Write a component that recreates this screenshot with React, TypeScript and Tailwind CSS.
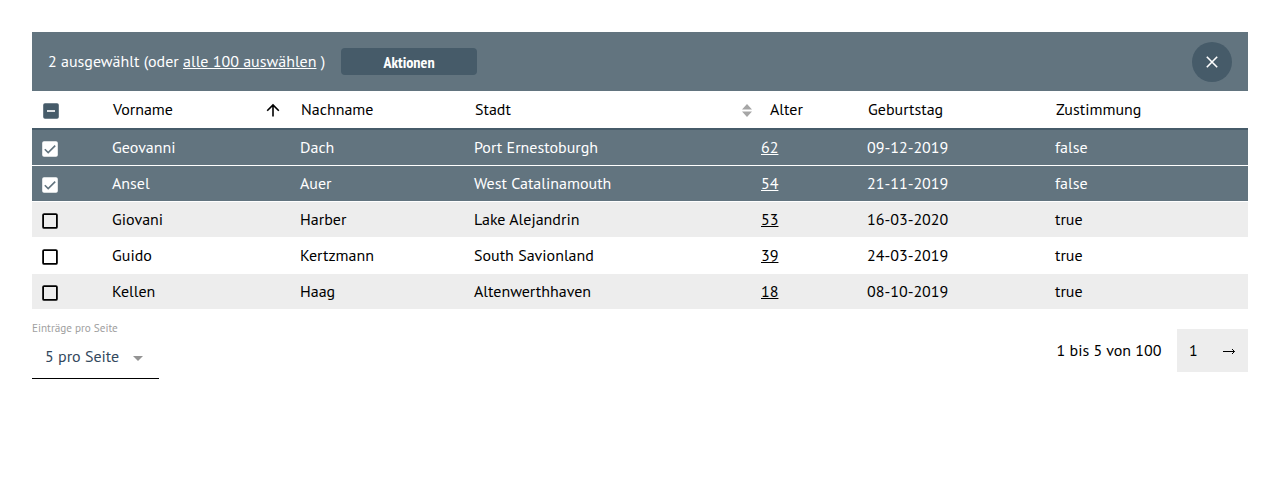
type Row = {
  first: string;
  last: string;
  city: string;
  age: number;
  birthday: string;
  consent: string;
  selected?: boolean;
};

const rows: Row[] = [
  { first: 'Geovanni', last: 'Dach', city: 'Port Ernestoburgh', age: 62, birthday: '09-12-2019', consent: 'false', selected: true },
  { first: 'Ansel', last: 'Auer', city: 'West Catalinamouth', age: 54, birthday: '21-11-2019', consent: 'false', selected: true },
  { first: 'Giovani', last: 'Harber', city: 'Lake Alejandrin', age: 53, birthday: '16-03-2020', consent: 'true' },
  { first: 'Guido', last: 'Kertzmann', city: 'South Savionland', age: 39, birthday: '24-03-2019', consent: 'true' },
  { first: 'Kellen', last: 'Haag', city: 'Altenwerthhaven', age: 18, birthday: '08-10-2019', consent: 'true' },
];

const columns = 'grid grid-cols-[80px_188px_174px_287px_106px_188px_193px]';

function Checkbox({ checked }: { checked?: boolean }) {
  return (
    <svg className="mt-[11px] ml-[10px] size-4" viewBox="0 0 16 16" fill="none">
      {checked ? (
        <>
          <rect x="0.2" y="0.2" width="15.6" height="15.6" rx="1.8" fill="#fff" />
          <path d="M2.8 8.2 6.2 11.6 13.2 4.6" stroke="#62747f" strokeWidth="1.6" />
        </>
      ) : (
        <rect x="1.1" y="1.1" width="13.8" height="13.8" rx="1" stroke="#000" strokeWidth="1.8" />
      )}
    </svg>
  );
}

function Toolbar() {
  return (
    <div className="flex h-[59px] items-center bg-[#62747f] pr-4 pl-4 text-white">
      <div className="w-[293px] pb-0.5 whitespace-pre">
        2 ausgewählt (oder <a className="underline">alle 100 auswählen</a> )
      </div>
      <button className="h-[27px] w-[136px] rounded-[4px] bg-[#465b69] pt-[2px] font-['PT_Sans_Narrow','PT_Sans','Open_Sans',sans-serif] text-[16px] leading-[25px] font-bold">
        Aktionen
      </button>
      <button className="ml-auto flex size-10 items-center justify-center rounded-full bg-[#465b69]">
        <svg className="size-3" viewBox="0 0 12 12" stroke="#fff" strokeWidth="1.6">
          <path d="M.8.8 11.2 11.2M11.2.8.8 11.2" />
        </svg>
      </button>
    </div>
  );
}

function HeaderRow() {
  return (
    <div className={`${columns} h-[39px] border-b-2 border-[#465b69] leading-[37px]`}>
      <svg className="mt-3 ml-[11px] size-4" viewBox="0 0 16 16">
        <rect x="0.2" y="0.2" width="15.6" height="15.6" rx="1.8" fill="#465b69" />
        <path d="M4 8h8" stroke="#dde1e4" strokeWidth="2" />
      </svg>
      <div className="flex justify-between pr-5 pl-px">
        <span>Vorname</span>
        <svg className="mt-3 size-[14px]" viewBox="0 0 14 14" fill="none" stroke="#000" strokeWidth="1.6">
          <path d="M7 13.5V2M1.2 7.7 7 1.9l5.8 5.8" />
        </svg>
      </div>
      <div className="pl-px">Nachname</div>
      <div className="flex justify-between pr-[9px] pl-px">
        <span>Stadt</span>
        <svg className="mt-[13px] h-[13px] w-[10px]" viewBox="0 0 10 13" fill="#a6a6a6">
          <path d="M5 0 10 5.5H0zM5 13 10 7.5H0z" />
        </svg>
      </div>
      <div className="pl-[9px]">Alter</div>
      <div className="pl-px">Geburtstag</div>
      <div className="pl-px">Zustimmung</div>
    </div>
  );
}

function BodyRow({ row }: { row: Row }) {
  const tone = row.selected ? 'bg-[#62747f] text-white' : 'text-black even:bg-white odd:bg-[#ededed]';
  return (
    <div className={`${columns} h-9 border-b border-white leading-[35px] ${tone}`}>
      <Checkbox checked={row.selected} />
      <div>{row.first}</div>
      <div>{row.last}</div>
      <div>{row.city}</div>
      <div>
        <a className="underline">{row.age}</a>
      </div>
      <div>{row.birthday}</div>
      <div>{row.consent}</div>
    </div>
  );
}

function Footer() {
  return (
    <div className="flex justify-between">
      <div className="w-[127px] pt-[10px]">
        <div className="text-[11.2px] leading-4 text-[#a0a0a0]">Einträge pro Seite</div>
        <div className="flex h-[43px] items-center border-b border-black pl-[13px] text-[#34495e]">
          <span className="w-[88px] pb-0.5 whitespace-nowrap">5 pro Seite</span>
          <svg className="mt-[3px] h-[5px] w-[10px]" viewBox="0 0 10 5" fill="#949494">
            <path d="M0 0h10L5 5z" />
          </svg>
        </div>
      </div>
      <div className="mt-[19px] flex h-[43px] items-center">
        <span className="mr-[15.500px] pb-0.5 whitespace-nowrap">1 bis 5 von 100</span>
        <div className="flex h-full w-[71px] items-center bg-[#ededed] pl-3">
          <span className="w-[34px] pb-0.5">1</span>
          <svg className="h-[7px] w-3" viewBox="0 0 12 7" fill="none" stroke="#000" strokeWidth="1">
            <path d="M0 4.500h11.500M9 2l2.500 2.500L9 7" />
          </svg>
        </div>
      </div>
    </div>
  );
}

export default function App() {
  return (
    <div className="h-[500px] bg-white p-8 font-['PT_Sans','Open_Sans',sans-serif] text-base leading-6 text-black">
      <Toolbar />
      <HeaderRow />
      <div>
        {rows.map((row) => (
          <BodyRow key={row.first} row={row} />
        ))}
      </div>
      <Footer />
    </div>
  );
}
